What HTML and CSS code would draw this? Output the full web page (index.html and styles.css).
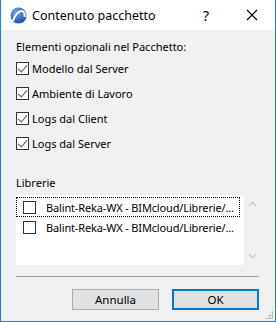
FILE: index.html
```html
<!DOCTYPE html>
<html lang="it">
<head>
    <meta charset="UTF-8">
    <title>Contenuto pacchetto</title>
    <link rel="stylesheet" href="styles.css">
</head>
<body>
    <div class="dialog">
        <div class="titlebar">
            <svg class="app-icon" width="17" height="17" viewBox="0 0 17 17">
                <defs>
                    <radialGradient id="g" cx="35%" cy="30%" r="75%">
                        <stop offset="0" stop-color="#6fa3e8"/>
                        <stop offset="1" stop-color="#1c4fa8"/>
                    </radialGradient>
                </defs>
                <circle cx="8.5" cy="8.5" r="8" fill="url(#g)"/>
                <path d="M3 14 C5 7 9 4 12 4 C14 4 15 7 14.5 10" fill="none" stroke="#fff" stroke-width="2"/>
            </svg>
            <span class="title">Contenuto pacchetto</span>
            <span class="tb-btn help">?</span>
            <span class="tb-btn close">
                <svg width="12" height="12" viewBox="0 0 12 12"><path d="M1 1 L11 11 M11 1 L1 11" stroke="#000" stroke-width="1.1"/></svg>
            </span>
        </div>

        <div class="body">
            <div class="label">Elementi opzionali nel Pacchetto:</div>
            <div class="options">
                <label class="check-row"><span class="box checked"></span>Modello dal Server</label>
                <label class="check-row"><span class="box checked"></span>Ambiente di Lavoro</label>
                <label class="check-row"><span class="box checked"></span>Logs dal Client</label>
                <label class="check-row"><span class="box checked"></span>Logs dal Server</label>
            </div>

            <div class="label libs">Librerie</div>
            <div class="listbox">
                <div class="items">
                    <div class="item focused"><span class="box"></span>Balint-Reka-WX - BIMcloud/Librerie/...</div>
                    <div class="item"><span class="box"></span>Balint-Reka-WX - BIMcloud/Librerie/...</div>
                </div>
                <div class="scrollbar">
                    <svg width="9" height="6" viewBox="0 0 9 6"><path d="M1 5 L4.5 1.5 L8 5" fill="none" stroke="#c8c8c8" stroke-width="1.4"/></svg>
                    <svg width="9" height="6" viewBox="0 0 9 6"><path d="M1 1 L4.5 4.5 L8 1" fill="none" stroke="#c8c8c8" stroke-width="1.4"/></svg>
                </div>
            </div>

            <div class="separator"></div>

            <div class="buttons">
                <button class="btn">Annulla</button>
                <button class="btn default">OK</button>
            </div>
        </div>
        <div class="grip"></div>
    </div>
</body>
</html>
```

FILE: styles.css
```css
body {
    margin: 0;
    font-family: "Noto Sans", "Open Sans", sans-serif;
    font-size: 11px;
    color: #000;
}
.dialog {
    position: relative;
    width: 276px;
    height: 322px;
    box-sizing: border-box;
    border: 1px solid #1a7fd4;
    border-top: none;
    background: #f0f0f0;
    display: flex;
    flex-direction: column;
}
.titlebar {
    height: 30px;
    background: #fff;
    display: flex;
    align-items: center;
    padding-left: 9px;
}
.app-icon {
    margin-right: 5px;
}
.title {
    flex: 1;
    font-size: 12.5px;
}
.tb-btn {
    width: 46px;
    height: 30px;
    display: flex;
    align-items: center;
    justify-content: center;
}
.help {
    font-size: 14px;
}
.body {
    padding: 9px 15px 0 15px;
    display: flex;
    flex-direction: column;
}
.label {
    height: 16px;
    line-height: 16px;
}
.options {
    margin-top: 1px;
}
.check-row {
    height: 25px;
    display: flex;
    align-items: center;
}
.box {
    flex-shrink: 0;
    width: 11px;
    height: 11px;
    border: 1px solid #333;
    background: #fff;
    margin-right: 3px;
    position: relative;
}
.box.checked::after {
    content: "";
    position: absolute;
    left: 3px;
    top: 0px;
    width: 4px;
    height: 8px;
    border-right: 1px solid #555;
    border-bottom: 1px solid #555;
    transform: rotate(40deg);
}
.libs {
    margin-top: 19px;
}
.listbox {
    margin-top: 4px;
    height: 70px;
    width: 244px;
    display: flex;
}
.items {
    width: 228px;
    background: #fff;
    padding-top: 2px;
    box-sizing: border-box;
}
.item {
    height: 20px;
    box-sizing: border-box;
    display: flex;
    align-items: center;
    padding-left: 6px;
    width: 224px;
    white-space: nowrap;
    overflow: hidden;
    letter-spacing: -0.15px;
    border: 1px dotted transparent;
}
.item.focused {
    border-color: #000;
}
.item .box {
    margin-right: 10px;
}
.scrollbar {
    flex: 1;
    display: flex;
    flex-direction: column;
    justify-content: space-between;
    align-items: center;
    padding: 6px 0 6px;
}
.separator {
    margin-top: 11px;
    height: 1px;
    background: #a0a0a0;
    width: 243px;
}
.buttons {
    margin-top: 12px;
    display: flex;
    justify-content: flex-end;
    gap: 13px;
    padding-right: 1px;
}
.btn {
    width: 87px;
    height: 21px;
    box-sizing: border-box;
    background: #e1e1e1;
    border: 1px solid #adadad;
    font-family: inherit;
    font-size: 11.5px;
    padding: 0;
}
.btn.default {
    border: 2px solid #0078d7;
}
.grip {
    position: absolute;
    right: 2px;
    bottom: 2px;
    width: 8px;
    height: 8px;
    background:
        radial-gradient(circle, #bcbcbc 1px, transparent 1.2px) 0 0 / 3px 3px;
    clip-path: polygon(100% 0, 100% 100%, 0 100%);
}
```
